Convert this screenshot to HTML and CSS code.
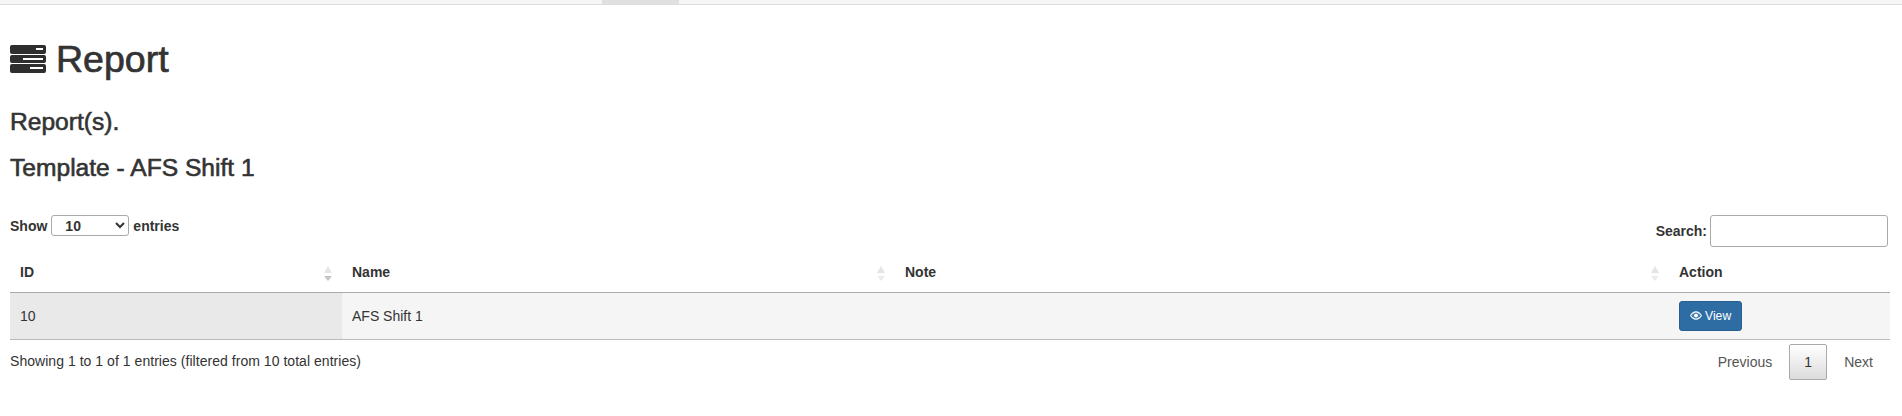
FILE: index.html
```html
<!DOCTYPE html>
<html lang="en">
<head>
    <meta charset="UTF-8">
    <title>Report</title>
    <link rel="stylesheet" href="styles.css">
</head>
<body>

<div class="topbar">
    <div class="tab-active"></div>
</div>

<div class="content">
    <h1 class="page-title">
        <svg class="title-icon" viewBox="0 0 36 28" width="36" height="28">
            <path fill-rule="evenodd" fill="#2e2e2e" d="M2 0h32a2 2 0 0 1 2 2v5a2 2 0 0 1-2 2H2a2 2 0 0 1-2-2V2a2 2 0 0 1 2-2zM26 3v2h7V3zM2 10h32a2 2 0 0 1 2 2v4a2 2 0 0 1-2 2H2a2 2 0 0 1-2-2v-4a2 2 0 0 1 2-2zM13 13v2h20v-2zM2 19h32a2 2 0 0 1 2 2v5a2 2 0 0 1-2 2H2a2 2 0 0 1-2-2v-5a2 2 0 0 1 2-2zM20 22v2h13v-2z"/>
        </svg>
        Report
    </h1>
    <h3 class="subtitle">Report(s).</h3>
    <h3 class="template-title">Template - AFS Shift 1</h3>

    <div class="table-top">
        <label class="length-label">Show
            <select class="length-select"><option>10</option></select>
            entries</label>
        <label class="search-label">Search:
            <input type="search" class="search-input"></label>
    </div>

    <table class="report-table">
        <thead>
            <tr>
                <th class="col-id">ID
                    <svg class="sort-icon" viewBox="0 0 10 18" width="10" height="18"><path fill="#e4e4e4" d="M5 1l4 7H1z"/><path fill="#c4c4c4" d="M1 11h8l-4 5z"/></svg>
                </th>
                <th class="col-name">Name
                    <svg class="sort-icon" viewBox="0 0 10 18" width="10" height="18"><path fill="#e4e4e4" d="M5 1l4 7H1z"/><path fill="#ececec" d="M1 11h8l-4 5z"/></svg>
                </th>
                <th class="col-note">Note
                    <svg class="sort-icon" viewBox="0 0 10 18" width="10" height="18"><path fill="#e4e4e4" d="M5 1l4 7H1z"/><path fill="#ececec" d="M1 11h8l-4 5z"/></svg>
                </th>
                <th class="col-action">Action</th>
            </tr>
        </thead>
        <tbody>
            <tr>
                <td class="cell-sorted">10</td>
                <td>AFS Shift 1</td>
                <td></td>
                <td>
                    <button class="btn-view">
                        <svg class="eye-icon" viewBox="0 0 14 10" width="12" height="9"><path fill-rule="evenodd" fill="#fff" d="M7 0c3 0 5.500 2 7 5-1.500 3-4 5-7 5S1.500 8 0 5c1.500-3 4-5 7-5zM7 1.500a3.500 3.500 0 1 0 0 7 3.500 3.500 0 0 0 0-7zM1.300 5c.7 1 1.500 1.900 2.500 2.500A4.500 4.500 0 0 1 3.800 2.500C2.800 3.100 2 4 1.300 5zM10.200 2.500a4.500 4.500 0 0 1 0 5c1-.6 1.800-1.500 2.500-2.500-.7-1-1.500-1.900-2.500-2.500z"/><circle cx="7" cy="5" r="2.300" fill="#fff"/></svg>
                        View
                    </button>
                </td>
            </tr>
        </tbody>
    </table>

    <div class="table-bottom">
        <div class="info">Showing 1 to 1 of 1 entries (filtered from 10 total entries)</div>
        <div class="pager">
            <a class="page-link">Previous</a>
            <a class="page-link current">1</a>
            <a class="page-link">Next</a>
        </div>
    </div>
</div>

</body>
</html>
```

FILE: styles.css
```css
* {
    box-sizing: border-box;
}

body {
    margin: 0;
    font-family: "Liberation Sans", Arial, sans-serif;
    font-size: 14px;
    color: #333;
    background-color: #fff;
}

.topbar {
    height: 5px;
    background-color: #f5f5f5;
    border-bottom: 1px solid #ddd;
    padding-left: 602px;
}

.tab-active {
    width: 77px;
    height: 4px;
    background-color: #e0e0e0;
}

.content {
    padding: 0 12px 0 10px;
}

.page-title {
    display: flex;
    align-items: center;
    gap: 10px;
    margin: 30px 0 0;
    height: 48px;
    font-size: 37.5px;
    font-weight: 400;
    line-height: 48px;
    -webkit-text-stroke: 0.7px #333;
}

.title-icon {
    flex: none;
}

.subtitle,
.template-title {
    margin: 0;
    font-size: 24.6px;
    font-weight: 400;
    line-height: 28px;
    -webkit-text-stroke: 0.6px #333;
}

.subtitle {
    margin-top: 25px;
}

.template-title {
    margin-top: 18px;
}

.table-top {
    display: flex;
    justify-content: space-between;
    margin-top: 33px;
    height: 38px;
    font-weight: 700;
}

.length-label {
    display: flex;
    align-items: center;
    align-self: flex-start;
    gap: 4px;
    height: 21px;
}

.length-select {
    width: 78px;
    height: 21px;
    padding: 0 9px;
    font-family: inherit;
    font-size: 14px;
    font-weight: 700;
    color: #333;
    background-color: #fff;
    border: 1px solid #aaa;
    border-radius: 3px;
}

.search-label {
    display: flex;
    align-items: center;
    gap: 3px;
    height: 32px;
}

.search-input {
    width: 178px;
    height: 32px;
    margin-right: 2px;
    background-color: #fff;
    border: 1px solid #aaa;
    border-radius: 3px;
}

.report-table {
    width: 100%;
    table-layout: fixed;
    border-collapse: collapse;
}

.report-table th {
    position: relative;
    height: 39px;
    padding: 0 10px;
    font-weight: 700;
    text-align: left;
    border-bottom: 1px solid #aaa;
}

.report-table td {
    height: 47px;
    padding: 0 10px;
    background-color: #f5f5f5;
    border-bottom: 1px solid #bbb;
}

.report-table td.cell-sorted {
    background-color: #e9e9e9;
}

.col-id {
    width: 332px;
}

.col-name {
    width: 553px;
}

.col-action {
    width: 221px;
}

.sort-icon {
    position: absolute;
    top: 12px;
    right: 9px;
}

.btn-view {
    display: inline-flex;
    align-items: center;
    gap: 3px;
    height: 30px;
    padding: 0 10px;
    font-family: inherit;
    font-size: 12.2px;
    color: #fff;
    background-color: #2e6da4;
    border: 1px solid #286090;
    border-radius: 3px;
}

.table-bottom {
    display: flex;
    justify-content: space-between;
    padding-top: 4px;
}

.info {
    padding-top: 9px;
    letter-spacing: 0.04px;
}

.pager {
    display: flex;
}

.page-link {
    height: 36px;
    padding: 0 17px;
    line-height: 36px;
    color: #555;
}

.page-link.current {
    width: 38px;
    padding: 0;
    text-align: center;
    color: #333;
    background: linear-gradient(to bottom, #fff, #dcdcdc);
    border: 1px solid #aaa;
    border-radius: 2px;
    line-height: 34px;
}
```
